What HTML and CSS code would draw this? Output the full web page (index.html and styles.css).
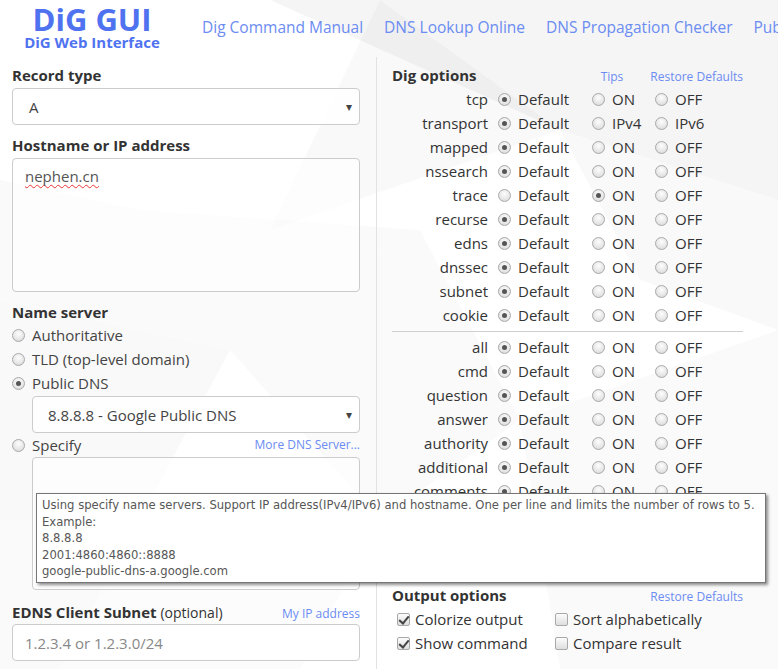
FILE: index.html
```html
<!DOCTYPE html>
<html>
<head>
<meta charset="utf-8">
<link rel="stylesheet" href="styles.css">
</head>
<body>
<svg class="bg" width="778" height="669" viewBox="0 0 778 669">
  <polygon points="270,0 778,0 778,200 560,130" fill="#000" fill-opacity="0.04"/>
  <polygon points="380,0 560,130 270,230" fill="#000" fill-opacity="0.025"/>
  <polygon points="560,130 778,200 778,330 640,280" fill="#000" fill-opacity="0.025"/>
  <polygon points="0,180 140,210 0,300" fill="#000" fill-opacity="0.02"/>
  <polygon points="140,210 420,230 230,350 0,300" fill="#000" fill-opacity="0.018"/>
  <polygon points="0,300 230,350 140,520 0,520" fill="#000" fill-opacity="0.025"/>
  <polygon points="230,350 420,230 520,420 380,520" fill="#000" fill-opacity="0.02"/>
  <polygon points="520,420 778,330 778,669 560,669" fill="#000" fill-opacity="0.018"/>
  <polygon points="0,520 140,520 60,669 0,669" fill="#000" fill-opacity="0.02"/>
  <polygon points="140,520 380,520 300,669 60,669" fill="#000" fill-opacity="0.012"/>
</svg>
<header class="top">
  <div class="logo">
    <div class="logo-title">DiG GUI</div>
    <div class="logo-sub">DiG Web Interface</div>
  </div>
  <nav class="nav">
    <a href="#">Dig Command Manual</a>
    <a href="#">DNS Lookup Online</a>
    <a href="#">DNS Propagation Checker</a>
    <a href="#">Public DNS Servers</a>
  </nav>
</header>
<main class="cols">
  <section class="left">
    <div class="label">Record type</div>
    <div class="select"><span>A</span><span class="caret">&#9662;</span></div>

    <div class="label mt">Hostname or IP address</div>
    <div class="textarea host"><span class="spell">nephen.cn</span></div>

    <div class="label mt">Name server</div>
    <div class="radio-line first"><span class="radio"></span>Authoritative</div>
    <div class="radio-line"><span class="radio"></span>TLD (top-level domain)</div>
    <div class="radio-line"><span class="radio on"></span>Public DNS</div>
    <div class="select sub"><span>8.8.8.8 - Google Public DNS</span><span class="caret">&#9662;</span></div>
    <div class="radio-line split"><span class="rl"><span class="radio"></span>Specify</span><a class="small-link" href="#">More DNS Server...</a></div>
    <div class="textarea spec"></div>

    <div class="label-row mt2"><span class="label">EDNS Client Subnet <span class="optional">(optional)</span></span><a class="small-link" href="#">My IP address</a></div>
    <div class="input"><span class="ph">1.2.3.4 or 1.2.3.0/24</span></div>
  </section>

  <section class="right">
    <div class="label-row head"><span class="label">Dig options</span><span class="links"><a class="small-link" href="#">Tips</a><a class="small-link" href="#">Restore Defaults</a></span></div>
    <div class="opts">
      <div class="opt"><span class="name">tcp</span><span class="c1"><span class="radio on"></span>Default</span><span class="c2"><span class="radio"></span>ON</span><span class="c3"><span class="radio"></span>OFF</span></div>
      <div class="opt"><span class="name">transport</span><span class="c1"><span class="radio on"></span>Default</span><span class="c2"><span class="radio"></span>IPv4</span><span class="c3"><span class="radio"></span>IPv6</span></div>
      <div class="opt"><span class="name">mapped</span><span class="c1"><span class="radio on"></span>Default</span><span class="c2"><span class="radio"></span>ON</span><span class="c3"><span class="radio"></span>OFF</span></div>
      <div class="opt"><span class="name">nssearch</span><span class="c1"><span class="radio on"></span>Default</span><span class="c2"><span class="radio"></span>ON</span><span class="c3"><span class="radio"></span>OFF</span></div>
      <div class="opt"><span class="name">trace</span><span class="c1"><span class="radio"></span>Default</span><span class="c2"><span class="radio on"></span>ON</span><span class="c3"><span class="radio"></span>OFF</span></div>
      <div class="opt"><span class="name">recurse</span><span class="c1"><span class="radio on"></span>Default</span><span class="c2"><span class="radio"></span>ON</span><span class="c3"><span class="radio"></span>OFF</span></div>
      <div class="opt"><span class="name">edns</span><span class="c1"><span class="radio on"></span>Default</span><span class="c2"><span class="radio"></span>ON</span><span class="c3"><span class="radio"></span>OFF</span></div>
      <div class="opt"><span class="name">dnssec</span><span class="c1"><span class="radio on"></span>Default</span><span class="c2"><span class="radio"></span>ON</span><span class="c3"><span class="radio"></span>OFF</span></div>
      <div class="opt"><span class="name">subnet</span><span class="c1"><span class="radio on"></span>Default</span><span class="c2"><span class="radio"></span>ON</span><span class="c3"><span class="radio"></span>OFF</span></div>
      <div class="opt"><span class="name">cookie</span><span class="c1"><span class="radio on"></span>Default</span><span class="c2"><span class="radio"></span>ON</span><span class="c3"><span class="radio"></span>OFF</span></div>
    </div>
    <hr class="sep">
    <div class="opts">
      <div class="opt"><span class="name">all</span><span class="c1"><span class="radio on"></span>Default</span><span class="c2"><span class="radio"></span>ON</span><span class="c3"><span class="radio"></span>OFF</span></div>
      <div class="opt"><span class="name">cmd</span><span class="c1"><span class="radio on"></span>Default</span><span class="c2"><span class="radio"></span>ON</span><span class="c3"><span class="radio"></span>OFF</span></div>
      <div class="opt"><span class="name">question</span><span class="c1"><span class="radio on"></span>Default</span><span class="c2"><span class="radio"></span>ON</span><span class="c3"><span class="radio"></span>OFF</span></div>
      <div class="opt"><span class="name">answer</span><span class="c1"><span class="radio on"></span>Default</span><span class="c2"><span class="radio"></span>ON</span><span class="c3"><span class="radio"></span>OFF</span></div>
      <div class="opt"><span class="name">authority</span><span class="c1"><span class="radio on"></span>Default</span><span class="c2"><span class="radio"></span>ON</span><span class="c3"><span class="radio"></span>OFF</span></div>
      <div class="opt"><span class="name">additional</span><span class="c1"><span class="radio on"></span>Default</span><span class="c2"><span class="radio"></span>ON</span><span class="c3"><span class="radio"></span>OFF</span></div>
      <div class="opt"><span class="name">comments</span><span class="c1"><span class="radio on"></span>Default</span><span class="c2"><span class="radio"></span>ON</span><span class="c3"><span class="radio"></span>OFF</span></div>
      <div class="opt"><span class="name">stats</span><span class="c1"><span class="radio on"></span>Default</span><span class="c2"><span class="radio"></span>ON</span><span class="c3"><span class="radio"></span>OFF</span></div>
      <div class="opt"><span class="name">ttlid</span><span class="c1"><span class="radio on"></span>Default</span><span class="c2"><span class="radio"></span>ON</span><span class="c3"><span class="radio"></span>OFF</span></div>
      <div class="opt"><span class="name">ttlunits</span><span class="c1"><span class="radio on"></span>Default</span><span class="c2"><span class="radio"></span>ON</span><span class="c3"><span class="radio"></span>OFF</span></div>
    </div>
    <div class="label-row out"><span class="label">Output options</span><a class="small-link" href="#">Restore Defaults</a></div>
    <div class="checks">
      <div class="chk"><span class="box on"></span>Colorize output</div>
      <div class="chk"><span class="box"></span>Sort alphabetically</div>
      <div class="chk"><span class="box on"></span>Show command</div>
      <div class="chk"><span class="box"></span>Compare result</div>
    </div>
  </section>
</main>
<div class="tooltip">Using specify name servers. Support IP address(IPv4/IPv6) and hostname. One per line and limits the number of rows to 5.<br>Example:<br>8.8.8.8<br>2001:4860:4860::8888<br>google-public-dns-a.google.com</div>
</body>
</html>
```

FILE: styles.css
```css
* { box-sizing: border-box; }
html, body { margin: 0; padding: 0; }
body {
  width: 778px;
  height: 669px;
  overflow: hidden;
  position: relative;
  background: #fff;
  font-family: "Open Sans", "Noto Sans", sans-serif;
  font-size: 15px;
  color: #333;
}
.bg { position: absolute; left: 0; top: 0; z-index: 0; pointer-events: none; }
a { text-decoration: none; }

.top {
  position: relative;
  z-index: 1;
  display: flex;
  align-items: flex-start;
  height: 57px;
  white-space: nowrap;
}
.logo {
  flex: none;
  width: 184px;
  text-align: center;
  color: #4f73f0;
  font-weight: 700;
}
.logo-title { font-size: 31px; line-height: 30px; margin-top: 4px; }
.logo-sub { font-size: 15px; line-height: 16px; }
.nav { display: flex; gap: 21px; padding-top: 16px; padding-left: 18px; flex: none; }
.nav a { color: #6b8cf2; font-size: 15.5px; line-height: 22px; }

.cols {
  position: relative;
  z-index: 1;
  display: flex;
  padding-left: 12px;
}
.left {
  flex: none;
  width: 365px;
  padding-right: 16px;
  border-right: 1px solid #e2e2e2;
  padding-top: 8px;
  padding-bottom: 10px;
}
.right {
  flex: none;
  width: 366px;
  padding-left: 15px;
  padding-top: 8px;
}
.label { font-weight: 700; font-size: 15px; line-height: 20px; color: #333; white-space: nowrap; }
.label .optional { font-weight: 400; font-size: 14px; }
.mt { margin-top: 10px; }
.mt2 { margin-top: 12px; }
.label-row { display: flex; justify-content: space-between; align-items: baseline; }
.small-link { color: #6b8cf2; font-size: 12px; line-height: 16px; }

.select {
  margin-top: 3px;
  height: 37px;
  border: 1px solid #ccc;
  border-radius: 4px;
  background: rgba(255,255,255,0.85);
  display: flex;
  justify-content: space-between;
  align-items: center;
  padding: 0 7px 0 16px;
  font-size: 15px;
  color: #444;
}
.select .caret { font-size: 12px; color: #444; }
.select.sub { margin-left: 20px; margin-top: 1px; padding-left: 15px; }
.textarea {
  margin-top: 3px;
  border: 1px solid #ccc;
  border-radius: 4px;
  background: rgba(255,255,255,0.6);
  padding: 7px 12px;
  color: #555;
}
.textarea.host { height: 134px; }
.textarea.spec { height: 133px; margin-left: 20px; margin-top: 0; }
.spell { text-decoration: underline wavy #e33; text-decoration-skip-ink: none; text-underline-offset: 2px; text-decoration-thickness: 1px; }

.radio-line.first { margin-top: 1px; }
.radio-line { display: flex; align-items: center; height: 24px; color: #444; }
.radio-line.split { justify-content: space-between; }
.rl { display: flex; align-items: center; }
.radio-line .radio { margin-right: 7px; }
.radio {
  display: inline-block;
  width: 13px;
  height: 13px;
  border-radius: 50%;
  border: 1px solid #a9a9a9;
  background: radial-gradient(circle at 50% 35%, #fdfdfd 0%, #e6e6e6 60%, #d2d2d2 100%);
  position: relative;
  flex: none;
}
.radio.on::after {
  content: "";
  position: absolute;
  left: 3px; top: 3px;
  width: 5px; height: 5px;
  border-radius: 50%;
  background: #555;
}
.input {
  margin-top: 1px;
  height: 37px;
  border: 1px solid #ccc;
  border-radius: 4px;
  background: rgba(255,255,255,0.85);
  display: flex;
  align-items: center;
  padding-left: 12px;
}
.ph { color: #888; }

.head .links { display: flex; gap: 27px; margin-right: 0; }
.opts { margin-top: 2px; }
.opt { display: flex; align-items: center; height: 24px; color: #333; }
.opt .name { width: 96px; text-align: right; }
.opt .radio { margin-right: 7px; }
.opt .c1 { display: flex; align-items: center; width: 94px; margin-left: 10px; }
.opt .c2 { display: flex; align-items: center; width: 63px; }
.opt .c3 { display: flex; align-items: center; }
.sep { border: 0; border-top: 1px solid #cfcfcf; margin: 4px 0 3px 0; width: 351px; }
.out { margin-top: 10px; width: 351px; }
.checks { display: grid; grid-template-columns: 158px auto; padding-left: 5px; margin-top: 2px; }
.chk { display: flex; align-items: center; height: 24px; color: #333; }
.box {
  width: 13px; height: 13px;
  border: 1px solid #a9a9a9;
  border-radius: 2px;
  background: linear-gradient(#fcfcfc, #dedede);
  margin-right: 5px;
  position: relative;
  flex: none;
}
.box.on::after {
  content: "";
  position: absolute;
  left: 3px; top: 0px;
  width: 4px; height: 8px;
  border: solid #444;
  border-width: 0 2px 2px 0;
  transform: rotate(40deg);
}

.tooltip {
  position: absolute;
  left: 36px;
  top: 493px;
  width: 730px;
  height: 90px;
  z-index: 5;
  background: #fff;
  border: 1px solid #767676;
  box-shadow: 2px 2px 3px rgba(0,0,0,0.45);
  padding: 3px 5px;
  font-family: "DejaVu Sans Condensed", "Liberation Sans Narrow", "Liberation Sans", sans-serif;
  font-stretch: condensed;
  font-size: 12.9px;
  line-height: 16.5px;
  color: #575757;
  white-space: nowrap;
}
```
